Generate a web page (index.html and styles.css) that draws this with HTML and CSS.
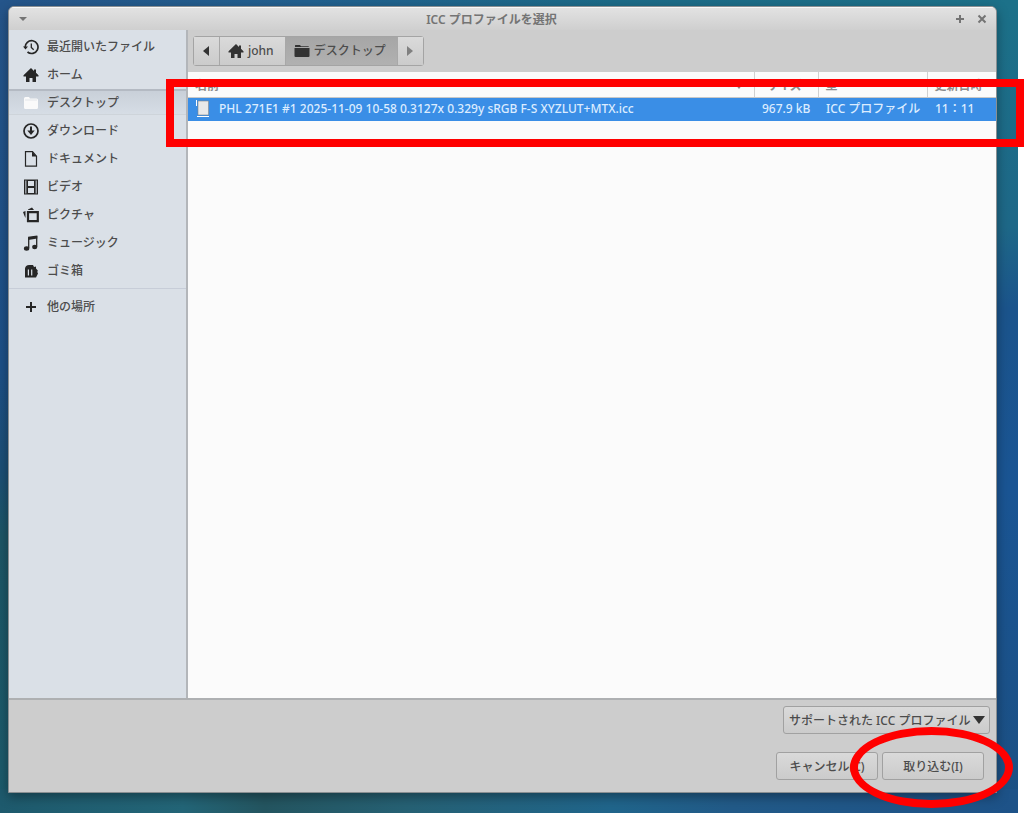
FILE: index.html
```html
<!DOCTYPE html>
<html lang="ja">
<head>
<meta charset="utf-8">
<title>ICC プロファイルを選択</title>
<link rel="stylesheet" href="styles.css">
</head>
<body>
<div class="desktop">
  <main class="window">
    <header class="titlebar">
      <button class="title-btn" aria-label="メニュー"><svg width="16" height="16" viewBox="0 0 16 16"><path d="M4 6h8l-4 4z" fill="#747474"/></svg></button>
      <h1 class="title">ICC プロファイルを選択</h1>
      <div class="title-actions">
        <button class="title-btn" aria-label="最大化"><svg width="16" height="16" viewBox="0 0 16 16"><path d="M8 4v8M4 8h8" stroke="#747474" stroke-width="2"/></svg></button>
        <button class="title-btn" aria-label="閉じる"><svg width="16" height="16" viewBox="0 0 16 16"><path d="M4.500 4.500l7 7M11.500 4.500l-7 7" stroke="#747474" stroke-width="2"/></svg></button>
      </div>
    </header>
    <div class="content">
      <nav class="sidebar">
        <a class="place" href="#recent"><svg class="icon" viewBox="0 0 16 16"><path d="M2.200 8.500A6.400 6.400 0 1 1 4.500 13" fill="none" stroke="#262626" stroke-width="1.700"/><path d="M0 7.500h5L2.500 10.500z" fill="#262626"/><path d="M8.300 4.500v4l2.400 2.300" fill="none" stroke="#262626" stroke-width="1.300"/></svg>最近開いたファイル</a>
        <a class="place" href="#home"><svg class="icon" viewBox="0 0 16 16"><path d="M8 1L.5 8.200V9.500H3V15h3.500v-4h3v4H13V9.500h2.500V8.200L13 5.800V2.500h-2v1.400z" fill="#262626"/></svg>ホーム</a>
        <a class="place selected" href="#desktop" aria-current="page"><svg class="icon" viewBox="0 0 16 16"><path d="M1 3.500Q1 2 2.500 2H6l1 1.500h6.500q1.500 0 1.500 1.500v7.500q0 1.500-1.500 1.500h-11Q1 14 1 12.500z" fill="#fafafa"/><path d="M2 5h12" stroke="#e3e6ea"/></svg>デスクトップ</a>
        <a class="place" href="#downloads"><svg class="icon" viewBox="0 0 16 16"><circle cx="8" cy="8" r="7" fill="none" stroke="#262626" stroke-width="1.700"/><path d="M8 3.500V9" stroke="#262626" stroke-width="2"/><path d="M4.300 7.500h7.400L8 12z" fill="#262626"/></svg>ダウンロード</a>
        <a class="place" href="#documents"><svg class="icon" viewBox="0 0 16 16"><path d="M2.500.700H9.500l4 4.500v10h-11z" fill="none" stroke="#262626" stroke-width="1.200"/><path d="M9 .500v5h4.800z" fill="#262626"/></svg>ドキュメント</a>
        <a class="place" href="#videos"><svg class="icon" viewBox="0 0 16 16"><path d="M1 .5h14v15H1z" fill="#262626"/><path d="M5 2h6v5H5zM5 9h6v5H5z" fill="#dae0e7"/><path d="M2.800 1.500v13M13.200 1.500v13" stroke="#b4bac1" stroke-width="1.200"/></svg>ビデオ</a>
        <a class="place" href="#pictures"><svg class="icon" viewBox="0 0 16 16"><path d="M5 5.200h9.800v9H5z" fill="none" stroke="#262626" stroke-width="2.200"/><path d="M0 5l2.500-1v7L1.500 9zM5 2.500l4-2 2 2.500H5z" fill="#262626"/></svg>ピクチャ</a>
        <a class="place" href="#music"><svg class="icon" viewBox="0 0 16 16"><path d="M5.700 13V3l8-1.300v10" fill="none" stroke="#262626" stroke-width="1.300"/><path d="M5.100 1.800L14.300.400v3L5.100 4.900z" fill="#262626"/><ellipse cx="3.600" cy="13.500" rx="2.700" ry="2.200" fill="#262626"/><ellipse cx="11.700" cy="12" rx="2.600" ry="2.200" fill="#262626"/></svg>ミュージック</a>
        <a class="place" href="#trash"><svg class="icon" viewBox="0 0 16 16"><path d="M2 14.500V5.500Q2.500 2 6 2h4l1 2 2-.5v2l1.800 2-.5 1.500.7 1.500-2 4z" fill="#262626"/><path d="M5.400 6.500v6M8.700 6.500v6" stroke="#dae0e7" stroke-width="1.200"/></svg>ゴミ箱</a>
        <hr class="rule">
        <a class="place" href="#other"><svg class="icon" viewBox="0 0 16 16"><path d="M8 3v10M3 8h10" stroke="#262626" stroke-width="2"/></svg>他の場所</a>
      </nav>
      <section class="browser">
        <div class="toolbar">
          <div class="pathbar">
            <button class="crumb arrow" aria-label="前へ"><svg width="8" height="12" viewBox="0 0 8 12"><path d="M7 1v10L1 6z" fill="#333"/></svg></button>
            <button class="crumb"><svg class="icon" viewBox="0 0 16 16"><path d="M8 1L.5 8.200V9.500H3V15h3.500v-4h3v4H13V9.500h2.500V8.200L13 5.800V2.500h-2v1.400z" fill="#333"/></svg>john</button>
            <button class="crumb active"><svg class="icon" viewBox="0 0 16 16"><path d="M1 4V2.500Q1 2 1.500 2H6l1 1.200h7q1 0 1 .8z" fill="#333"/><path d="M.5 5h15v8q0 1-1 1h-13q-1 0-1-1z" fill="#333"/></svg>デスクトップ</button>
            <button class="crumb arrow" aria-label="次へ"><svg width="8" height="12" viewBox="0 0 8 12"><path d="M1 1v10l6-5z" fill="#808080"/></svg></button>
          </div>
        </div>
        <table class="files">
          <colgroup><col><col class="col-size"><col class="col-type"><col class="col-date"></colgroup>
          <thead>
            <tr><th><span class="sorted">名前<svg width="8" height="6" viewBox="0 0 8 6"><path d="M0 1h8L4 6z" fill="#888"/></svg></span></th><th class="size">サイズ</th><th>型</th><th>更新日時</th></tr>
          </thead>
          <tbody>
            <tr><td><span class="file"><svg width="14" height="18" viewBox="0 0 14 18"><path d="M.5 0v6M1 16.500h12" stroke="#fff"/><path d="M2 1h10.500v14H2z" fill="#e9e9e9" stroke="#888" stroke-width=".6"/></svg>PHL 271E1 #1 2025-11-09 10-58 0.3127x 0.329y sRGB F-S XYZLUT+MTX.icc</span></td><td class="size">967.9 kB</td><td>ICC プロファイル</td><td>11：11</td></tr>
          </tbody>
        </table>
      </section>
    </div>
    <footer class="actions">
      <div class="filter">
        <select class="filter-select" aria-label="ファイルの種類"><option>サポートされた ICC プロファイル</option></select>
        <svg class="filter-arrow" width="12" height="8" viewBox="0 0 12 8"><path d="M0 0h12L6 8z" fill="#333"/></svg>
      </div>
      <div class="buttons">
        <button class="btn">キャンセル(C)</button>
        <button class="btn">取り込む(I)</button>
      </div>
    </footer>
  </main>
</div>
<div class="mark mark-file"></div>
<div class="mark mark-import"></div>
</body>
</html>
```
FILE: styles.css
```css
* { box-sizing: border-box; }
body {
  margin: 0;
  position: relative;
  background: #fff;
  color: #4c4c4c;
  font: 500 12px/16px "Noto Sans", "Noto Sans CJK JP", sans-serif;
}
button, select { font: inherit; color: inherit; margin: 0; }
svg { flex: none; display: block; }

.desktop {
  display: flex;
  min-height: 100vh;
  margin-right: 6px;
  padding: 6px 21px 20px 8px;
  background:
    linear-gradient(to right, #25558a, #22608f 30%, #1c6b88 60%, #1c7189) top / 100% 8px no-repeat,
    linear-gradient(to right, #1e5a6d, #236577 18%, #245560 26%, #266174 40%, #20658b 60%, #225a88 72%, #1d5288) bottom / 100% 24px no-repeat,
    linear-gradient(#25558a, #1d5087 45%, #1c4f75 58%, #1d5666 66%, #1c5b6c) left / 12px 100% no-repeat,
    linear-gradient(175deg, #1c7189 0, #1e6888 28%, #1b548c 38%, #1a5594 60%, #1c5083) right / 26px 100% no-repeat,
    #1d5087;
}
.window {
  flex: 1;
  display: flex;
  flex-direction: column;
  min-width: 0;
  border: 1px solid #8a8f92;
  border-radius: 6px 6px 0 0;
  background: #cdcdcd;
  box-shadow: 0 4px 12px rgba(0, 0, 0, .35);
  overflow: hidden;
}

.titlebar {
  display: flex;
  align-items: center;
  height: 23px;
  padding: 0 6px;
  border-top: 1px solid #f8f8f8;
  background: linear-gradient(#e2e2e2, #cfcfcf);
}
.title { flex: 1; margin: 0; padding-top: 2px; font-size: 12px; line-height: 16px; font-weight: 600; text-align: center; color: #747474; }
.title-actions { display: flex; gap: 6px; }
.title-btn { width: 16px; height: 16px; padding: 0; border: 0; background: none; }

.content { flex: 1; display: flex; min-height: 0; border-bottom: 2px solid #aeb0b2; }
.sidebar {
  width: 179px;
  padding-top: 3px;
  border-right: 2px solid #b3b6ba;
  background: #dae0e7;
}
.place {
  display: flex;
  align-items: center;
  gap: 8px;
  height: 28px;
  padding-left: 14px;
  line-height: 18px;
  color: inherit;
  text-decoration: none;
}
.icon { width: 16px; height: 16px; }
.selected {
  height: 26px;
  margin-bottom: 2px;
  border-top: 2px solid #b4bac3;
  border-bottom: 1px solid #ced4da;
  background: linear-gradient(#c9d0d9, #d6dde5);
}
.rule { margin: 3px 0 4px; border: 0; border-top: 1px solid #c7cdd8; }

.browser { flex: 1; min-width: 0; background: #fbfbfb; }
.toolbar { padding: 6px 5px; background: #cdcdcd; }
.pathbar { display: flex; width: fit-content; border: 1px solid #a4a4a4; border-radius: 3px; }
.crumb {
  display: flex;
  align-items: center;
  gap: 4px;
  height: 28px;
  padding: 0 11px 0 8px;
  border: 0;
  border-right: 1px solid #a8a8a8;
  background: linear-gradient(#dadada, #cbcbcb);
}
.crumb:last-child { border-right: 0; }
.arrow { padding: 0 9px 0 8px; }
.active { background: linear-gradient(#a6a6a6, #b1b1b1); }

.files { width: 100%; border-collapse: collapse; table-layout: fixed; }
.col-size { width: 64px; }
.col-type { width: 109px; }
.col-date { width: 69px; }
.files th {
  height: 25px;
  padding: 4px 7px 0;
  border-right: 1px solid #d0d0d0;
  border-bottom: 1px solid #c8c8c8;
  font-weight: 600;
  text-align: left;
  color: #8c8c8c;
  white-space: nowrap;
}
.files th:last-child { border-right: 0; }
.files th.size { padding: 4px 14px 0; text-align: center; text-indent: -4px; }
.sorted { display: flex; align-items: center; justify-content: space-between; padding-right: 4px; }
.files td { height: 24px; padding: 0 8px; background: #3a8ee6; color: #dcecff; white-space: nowrap; }
.files .size { text-align: right; }
.file { display: flex; align-items: center; gap: 9px; }

.actions { display: flex; flex-direction: column; align-items: flex-end; gap: 18px; padding: 6px 6px 12px; }
.filter { position: relative; display: flex; }
.filter-select {
  appearance: none;
  height: 28px;
  padding: 1px 18px 0 5px;
  border: 1px solid #a1a1a1;
  border-radius: 3px;
  background: linear-gradient(#dadada, #cbcbcb);
}
.filter-arrow { position: absolute; right: 5px; top: 10px; pointer-events: none; }
.buttons { display: flex; gap: 4px; padding-right: 6px; }
.btn {
  width: 102px;
  height: 28px;
  padding: 2px 0 0;
  border: 1px solid #a1a1a1;
  border-radius: 3px;
  background: linear-gradient(#dadada, #cbcbcb);
}

.mark { position: absolute; border: 8px solid #f00; pointer-events: none; }
.mark-file { left: 166px; right: 0; top: 79px; height: 68px; }
.mark-import { right: 11px; bottom: 5px; width: 163px; height: 81px; border-radius: 50%; }
```
